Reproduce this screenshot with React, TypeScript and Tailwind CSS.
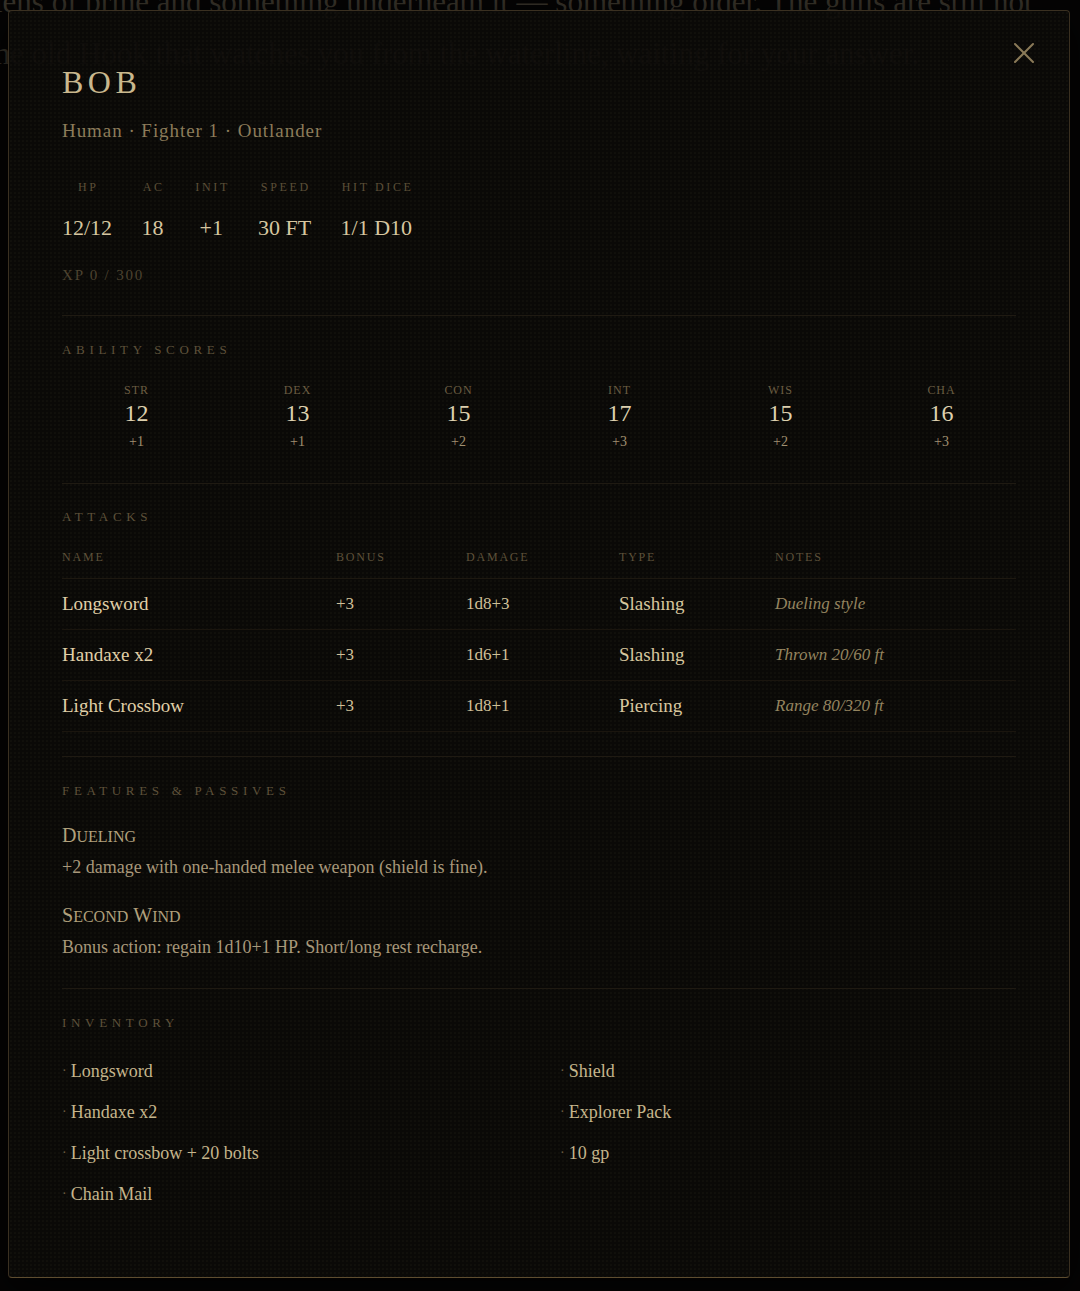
import React from 'react';

const serif = { fontFamily: '"Liberation Serif", "DejaVu Serif", serif' };

const stats = [
  { label: 'HP', value: '12/12' },
  { label: 'AC', value: '18' },
  { label: 'INIT', value: '+1' },
  { label: 'SPEED', value: '30 FT' },
  { label: 'HIT DICE', value: '1/1 D10' },
];

const abilities = [
  { key: 'STR', score: 12, mod: '+1' },
  { key: 'DEX', score: 13, mod: '+1' },
  { key: 'CON', score: 15, mod: '+2' },
  { key: 'INT', score: 17, mod: '+3' },
  { key: 'WIS', score: 15, mod: '+2' },
  { key: 'CHA', score: 16, mod: '+3' },
];

const attacks = [
  { name: 'Longsword', bonus: '+3', damage: '1d8+3', type: 'Slashing', notes: 'Dueling style' },
  { name: 'Handaxe x2', bonus: '+3', damage: '1d6+1', type: 'Slashing', notes: 'Thrown 20/60 ft' },
  { name: 'Light Crossbow', bonus: '+3', damage: '1d8+1', type: 'Piercing', notes: 'Range 80/320 ft' },
];

const features = [
  { title: 'Dueling', text: '+2 damage with one-handed melee weapon (shield is fine).' },
  { title: 'Second Wind', text: 'Bonus action: regain 1d10+1 HP. Short/long rest recharge.' },
];

const inventory = [
  'Longsword',
  'Shield',
  'Handaxe x2',
  'Explorer Pack',
  'Light crossbow + 20 bolts',
  '10 gp',
  'Chain Mail',
];

const SectionLabel: React.FC<{ children: React.ReactNode }> = ({ children }) => (
  <div className="text-[13px] leading-[16px] tracking-[0.36em] text-[#5e513a] uppercase">{children}</div>
);

// small-caps title: big initial, smaller rest of each word
const SmallCaps: React.FC<{ text: string }> = ({ text }) => (
  <>
    {text.split(' ').map((word, i) => (
      <span key={word} className={i > 0 ? 'ml-[5px]' : ''}>
        <span className="text-[20px]">{word[0].toUpperCase()}</span>
        <span className="text-[16px]">{word.slice(1).toUpperCase()}</span>
      </span>
    ))}
  </>
);

const CloseIcon = () => (
  <svg width="22" height="22" viewBox="0 0 22 22" fill="none" stroke="#8a7a58" strokeWidth="2" strokeLinecap="round">
    <line x1="2" y1="2" x2="20" y2="20" />
    <line x1="20" y1="2" x2="2" y2="20" />
  </svg>
);

export default function App() {
  return (
    <div className="relative h-[1291px] overflow-hidden bg-[#050404]" style={serif}>
      {/* story text behind the sheet */}
      <div className="-mt-[24px] whitespace-nowrap text-[31px] leading-[52px] text-[#39342b]">
        <p className="-ml-[6px]">lens of brine and something underneath it — something older. The gulls are still not</p>
        <p className="-ml-[14px]">the old Hook that watches you from the waterline, waiting for your answer.</p>
      </div>

      {/* character sheet dialog */}
      <div className="absolute left-[8px] top-[10px] h-[1268px] w-[1062px] rounded-[4px] border border-[#3a3021] border-b-[#5e4d30] bg-[#0b0a08]/[0.93] shadow-[0_10px_40px_rgba(0,0,0,0.8)]">
        <div className="h-full w-full bg-[radial-gradient(rgba(140,120,80,0.05)_1px,transparent_1px)] bg-[size:4px_4px] px-[53px] pt-[51px]">
          <button className="absolute right-[34px] top-[31px]">
            <CloseIcon />
          </button>

          <h1 className="text-[32px] leading-[40px] tracking-[0.14em] text-[#c9b88e]">BOB</h1>
          <div className="mt-[15px] text-[19px] leading-[28px] tracking-[0.05em] text-[#8c7c5a]">
            Human · Fighter 1 · Outlander
          </div>

          <div className="mt-[34px] flex gap-[28px]">
            {stats.map((s) => (
              <div key={s.label} className="flex flex-col items-center">
                <div className="pl-[0.22em] text-[12px] leading-[16px] tracking-[0.22em] text-[#5c4f38]">{s.label}</div>
                <div className="mt-[18px] text-[22px] leading-[30px] text-[#d6c6a0]">{s.value}</div>
              </div>
            ))}
          </div>
          <div className="mt-[22px] text-[15px] leading-[20px] tracking-[0.12em] text-[#4d4330]">XP 0 / 300</div>

          {/* ability scores */}
          <div className="mt-[30px] border-t border-[#1f1a12] pt-[26px]">
            <SectionLabel>Ability Scores</SectionLabel>
            <div className="mt-[24px] grid grid-cols-6 gap-3">
              {abilities.map((a) => (
                <div key={a.key} className="flex flex-col items-center">
                  <div className="text-[12px] leading-[16px] tracking-[0.08em] text-[#6b5d42]">{a.key}</div>
                  <div className="mt-[1px] text-[24px] leading-[28px] text-[#ddd0ae]">{a.score}</div>
                  <div className="mt-[5px] text-[14px] leading-[20px] text-[#a09070]">{a.mod}</div>
                </div>
              ))}
            </div>
          </div>

          {/* attacks */}
          <div className="mt-[31px] border-t border-[#1f1a12] pt-[25px]">
            <SectionLabel>Attacks</SectionLabel>
            <div className="mt-[24px]">
              <div className="grid grid-cols-[274px_130px_153px_156px_1fr] border-b border-[#1d1810] pb-[13px] text-[12px] leading-[16px] tracking-[0.15em] text-[#5e513a]">
                <div>NAME</div>
                <div>BONUS</div>
                <div>DAMAGE</div>
                <div>TYPE</div>
                <div>NOTES</div>
              </div>
              {attacks.map((a) => (
                <div
                  key={a.name}
                  className="grid h-[51px] grid-cols-[274px_130px_153px_156px_1fr] items-center border-b border-[#1a150e]"
                >
                  <div className="text-[19px] text-[#e0d0a8]">{a.name}</div>
                  <div className="text-[17px] text-[#d0c098]">{a.bonus}</div>
                  <div className="text-[17px] text-[#d0c098]">{a.damage}</div>
                  <div className="text-[19px] text-[#d6c69e]">{a.type}</div>
                  <div className="text-[17px] italic text-[#94845f]">{a.notes}</div>
                </div>
              ))}
            </div>
          </div>

          {/* features */}
          <div className="mt-[24px] border-t border-[#1f1a12] pt-[26px]">
            <SectionLabel>Features &amp; Passives</SectionLabel>
            <div className="mt-[24px]">
              {features.map((f, i) => (
                <div key={f.title} className={i > 0 ? 'mt-[22px]' : ''}>
                  <div className="h-[24px] leading-[24px] text-[#b0a07c]">
                    <SmallCaps text={f.title} />
                  </div>
                  <div className="mt-[6px] text-[18px] leading-[28px] text-[#a8987a]">{f.text}</div>
                </div>
              ))}
            </div>
          </div>

          {/* inventory */}
          <div className="mt-[27px] border-t border-[#1f1a12] pt-[26px]">
            <SectionLabel>Inventory</SectionLabel>
            <ul className="mt-[26px] grid grid-cols-2 gap-x-[42px] gap-y-[13px]">
              {inventory.map((item) => (
                <li key={item} className="flex items-center text-[18px] leading-[28px] text-[#c5b58c]">
                  <span className="mr-[4px] text-[14px] text-[#6a5c42]">·</span>
                  {item}
                </li>
              ))}
            </ul>
          </div>
        </div>
      </div>
    </div>
  );
}
